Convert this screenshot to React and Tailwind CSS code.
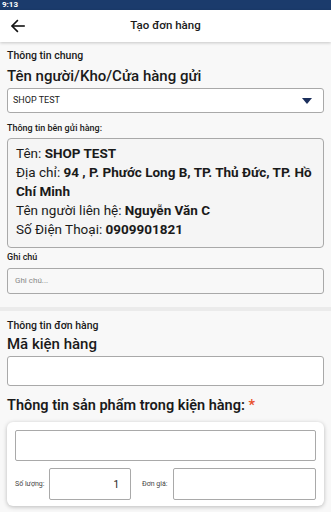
import React from "react";

function App() {
  return (
    <div className="w-[331px] h-[512px] overflow-hidden bg-[#f8f8f8] font-['Roboto',sans-serif] text-[#1a1a1a]">
      {/* status bar */}
      <div className="h-[10px] bg-[#1b3b6c] flex items-center px-[2px]">
        <span className="text-white text-[8px] font-bold leading-none">9:13</span>
      </div>
      {/* header */}
      <div className="h-[32px] bg-white relative flex items-center justify-center shadow-[0_1px_3px_rgba(0,0,0,0.2)] z-10">
        <svg className="absolute left-[10px] top-[8px]" width="16" height="16" viewBox="0 0 24 24" fill="none" stroke="#111" strokeWidth="2.4" strokeLinecap="square">
          <path d="M21 12H4" />
          <path d="M11 4l-8 8 8 8" />
        </svg>
        <span className="text-[11.5px] font-medium">Tạo đơn hàng</span>
      </div>

      <div className="px-[7px] pt-[7px]">
        <div className="text-[10.5px] font-medium leading-[14px]">Thông tin chung</div>
        <div className="text-[15px] font-medium leading-[20px] mt-[3px]">Tên người/Kho/Cửa hàng gửi</div>
        <div className="mt-[2px] h-[25px] bg-white border border-[#a9a9a9] rounded-[3px] flex items-center justify-between pl-[5px] pr-[11px]">
          <span className="text-[9px]">SHOP TEST</span>
          <svg width="10" height="6" viewBox="0 0 10 6">
            <path d="M0 0h10L5 6z" fill="#1b2f5c" />
          </svg>
        </div>
        <div className="text-[9px] font-medium leading-[12px] mt-[9px]">Thông tin bên gửi hàng:</div>
        <div className="mt-[4px] h-[110px] bg-[#f5f5f5] border border-[#a9a9a9] rounded-[4px] pl-[8px] pr-[4px] pt-[5px] text-[13.5px] leading-[19px]">
          <div>Tên: <b className="font-bold">SHOP TEST</b></div>
          <div>Địa chỉ: <b className="font-bold">94 , P. Phước Long B, TP. Thủ Đức, TP. Hồ Chí Minh</b></div>
          <div>Tên người liên hệ: <b className="font-bold">Nguyễn Văn C</b></div>
          <div>Số Điện Thoại: <b className="font-bold">0909901821</b></div>
        </div>
        <div className="text-[9px] font-medium leading-[12px] mt-[3px]">Ghi chú</div>
        <div className="mt-[5px] h-[26px] bg-[#f8f8f8] border border-[#a9a9a9] rounded-[3px] flex items-center pl-[7px]">
          <span className="text-[8px] text-[#8a8a8a]">Ghi chú...</span>
        </div>
      </div>

      <div className="h-[4px] bg-[#ebebeb] mt-[13px]" />

      <div className="px-[7px] pt-[8px]">
        <div className="text-[10.5px] font-medium leading-[14px]">Thông tin đơn hàng</div>
        <div className="text-[15px] font-medium leading-[20px] mt-[1px]">Mã kiện hàng</div>
        <div className="mt-[2px] h-[30px] bg-white border border-[#a9a9a9] rounded-[3px]" />
        <div className="text-[14.5px] font-semibold leading-[20px] mt-[10px]">
          Thông tin sản phẩm trong kiện hàng: <span className="text-[#e8502a]">*</span>
        </div>
        <div className="mt-[6px] bg-white rounded-[6px] shadow-[0_1px_4px_rgba(0,0,0,0.25)] px-[8px] pt-[8px] pb-[6px]">
          <div className="h-[31px] bg-white border border-[#a9a9a9] rounded-[2px]" />
          <div className="mt-[7px] flex items-center">
            <span className="text-[7px] text-[#444] w-[34px]">Số lượng:</span>
            <div className="w-[82px] h-[32px] border border-[#a9a9a9] rounded-[2px] flex items-center justify-end pr-[11px] text-[10px]">1</div>
            <span className="text-[7px] text-[#444] ml-[11px] w-[31px]">Đơn giá:</span>
            <div className="flex-1 h-[32px] border border-[#a9a9a9] rounded-[2px]" />
          </div>
        </div>
      </div>
    </div>
  );
}

export default App;
